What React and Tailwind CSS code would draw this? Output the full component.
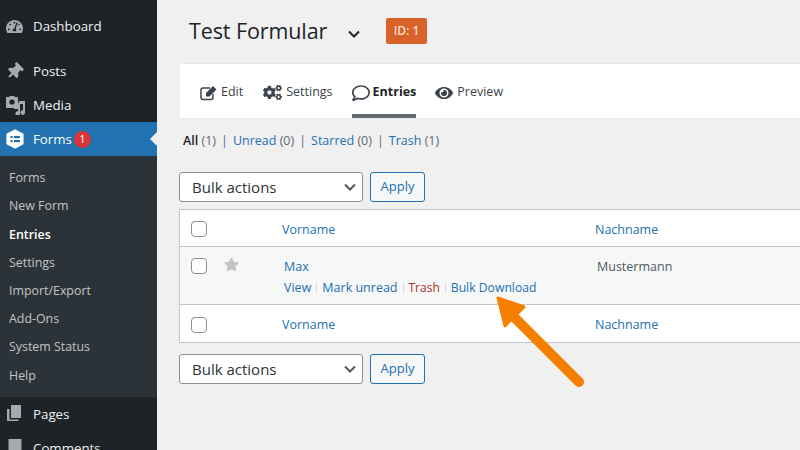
import React from "react";
import { FaCogs, FaRegComment, FaEye, FaTachometerAlt, FaThumbtack, FaStar } from "react-icons/fa";

const font = { fontFamily: '"Open Sans", "Noto Sans", sans-serif' };

function MediaIcon() {
  return (
    <svg width="20" height="20" viewBox="0 0 20 20" fill="currentColor">
      <path d="M1 1h3l1-1h4l1 1h3v12H9v-1H1z" transform="translate(0 1)" />
      <circle cx="7" cy="7" r="2.6" fill="#1d2327" />
      <path d="M14 6h6v11.5a2.3 2.3 0 1 1-2-2.2V9h-3v9.5a2.3 2.3 0 1 1-2-2.2V8h1z" />
    </svg>
  );
}
function FormsIcon() {
  return (
    <svg width="20" height="20" viewBox="0 0 20 20">
      <path d="M10 1.500l7.600 4v9L10 18.500l-7.600-4v-9z" fill="#fff" stroke="#fff" strokeWidth="2" strokeLinejoin="round" />
      <rect x="5.500" y="7" width="2.200" height="2.200" fill="#2271b1" />
      <rect x="9" y="7" width="6" height="2.200" fill="#2271b1" />
      <rect x="5.500" y="11" width="2.200" height="2.200" fill="#2271b1" />
      <rect x="9" y="11" width="6" height="2.200" fill="#2271b1" />
    </svg>
  );
}
function PagesIcon() {
  return (
    <svg width="16" height="17" viewBox="0 0 16 17" fill="currentColor">
      <rect x="4" y="0" width="10" height="13" />
      <path d="M0 4h2.500v10.500h9V16H0z" />
    </svg>
  );
}
function CommentsIcon() {
  return (
    <svg width="16" height="17" viewBox="0 0 16 17" fill="currentColor">
      <path d="M1.500 0h13v11H9l-4 4v-4H1.500z" />
    </svg>
  );
}
function EditIcon() {
  return (
    <svg width="18" height="16" viewBox="0 0 18 16" className="text-[#3c434a]">
      <path d="M13 9v3.500a2 2 0 0 1-2 2H3a2 2 0 0 1-2-2V5a2 2 0 0 1 2-2h7" fill="none" stroke="currentColor" strokeWidth="1.500" />
      <path d="M6 8l7-7 3.500 3.500-7 7H6z" fill="currentColor" />
    </svg>
  );
}
function Chevron({ className }) {
  return (
    <svg className={className} width="14" height="14" viewBox="0 0 14 14" fill="none" stroke="currentColor" strokeWidth="2">
      <path d="M2 4.500l5 5 5-5" />
    </svg>
  );
}

function MenuItem({ icon, label, className = "" }) {
  return (
    <div className={`flex items-center h-[34px] shrink-0 text-[13.300px] text-[#f0f0f1] ${className}`}>
      <span className="w-[33px] flex justify-center pr-[4px] text-[#a7aaad]">{icon}</span>
      <span className="pt-[2px]">{label}</span>
    </div>
  );
}

function Sidebar() {
  const subs = ["Forms", "New Form", "Entries", "Settings", "Import/Export", "Add-Ons", "System Status", "Help"];
  return (
    <aside className="w-[157px] shrink-0 bg-[#1d2327] flex flex-col pt-[9px] overflow-hidden">
      <MenuItem icon={<FaTachometerAlt size={17} />} label="Dashboard" className="mb-[11px]" />
      <MenuItem icon={<FaThumbtack size={17} className="rotate-45" />} label="Posts" />
      <MenuItem icon={<MediaIcon />} label="Media" />
      <div className="relative flex items-center h-[34px] bg-[#2271b1] text-[13.300px] text-[#fff] shrink-0">
        <span className="w-[33px] flex justify-center pr-[4px]"><FormsIcon /></span>
        <span className="pt-[2px]">Forms</span>
        <span className="ml-[2px] w-[17px] h-[17px] rounded-full bg-[#d63638] text-white text-[11px] flex items-center justify-center">1</span>
        <span className="absolute right-0 top-[10px] border-y-[7px] border-r-[7px] border-y-transparent border-r-[#f0f0f1]" />
      </div>
      <div className="bg-[#2c3338] pt-[8.500px] pb-[6.500px] flex flex-col shrink-0">
        {subs.map((s) => (
          <div key={s} className={`h-[28.200px] flex items-center pl-[9px] text-[12.400px] ${s === "Entries" ? "text-white font-semibold" : "text-[#c3c4c7]"}`}>{s}</div>
        ))}
      </div>
      <MenuItem icon={<PagesIcon />} label="Pages" />
      <MenuItem icon={<CommentsIcon />} label="Comments" />
    </aside>
  );
}

function Tab({ icon, label, active, className = "" }) {
  return (
    <div className={`relative h-full pt-[3px] flex items-center text-[12.500px] ${active ? "text-[#1d2327] font-bold" : "text-[#3c434a]"} ${className}`}>
      {icon}
      <span>{label}</span>
      {active && <span className="absolute left-0 right-0 bottom-0 h-[4px] bg-[#646970]" />}
    </div>
  );
}

function BulkBar() {
  return (
    <div className="flex gap-[7px] ml-[-1px]">
      <div className="w-[184px] h-[30px] rounded-[3px] border border-[#8c8f94] bg-white flex items-center justify-between pl-[12px] pr-[5px] text-[15px] text-[#2c3338]">
        <span>Bulk actions</span>
        <Chevron className="text-[#50575e]" />
      </div>
      <div className="w-[55px] h-[30px] rounded-[3px] border border-[#2271b1] bg-[#f6f7f7] flex items-center justify-center text-[13px] text-[#2271b1]">Apply</div>
    </div>
  );
}

function Check() {
  return <span className="block w-[16px] h-[16px] rounded-[4px] border border-[#8c8f94] bg-white" />;
}

function TableRow({ children, className = "" }) {
  return <div className={`flex ${className}`}>{children}</div>;
}

function Sep() {
  return <span className="mx-[5px] w-px h-[11px] bg-[#dcdcde]" />;
}

function Pipe() {
  return <span className="mx-[5px] text-[#646970]">|</span>;
}

function HeadCells() {
  const link = "text-[#2271b1]";
  return (
    <>
      <span className="w-[102px] pl-[11px] pt-[2px]"><Check /></span>
      <span className={`w-[313px] pt-[4px] ${link}`}>Vorname</span>
      <span className={`pt-[4px] ${link}`}>Nachname</span>
    </>
  );
}

function Main() {
  const link = "text-[#2271b1]";
  return (
    <main className="flex-1 min-w-0 pl-[23px] flex flex-col overflow-hidden">
      <div className="h-[63px] flex items-center pl-[9px] pb-[1px] shrink-0">
        <h1 className="text-[21.500px] leading-none text-[#1d2327] w-[158px] tracking-[-0.1px]">Test Formular</h1>
        <Chevron className="text-[#1d2327] mt-[6px]" />
        <span className="ml-[25px] w-[41px] h-[26px] rounded-[2px] bg-[#d9622b] text-[#f7dccb] text-[12px] font-semibold flex items-center justify-center">ID: 1</span>
      </div>
      <div className="h-[56px] shrink-0 bg-white border-y border-[#e6e6e6] flex items-center pl-[20px]">
        <Tab icon={<EditIcon />} label="Edit" className="gap-[3px]" />
        <Tab icon={<FaCogs size={19} className="text-[#3c434a]" />} label="Settings" className="ml-[20px] gap-[4px]" />
        <Tab icon={<FaRegComment size={18} className="text-[#3c434a]" />} label="Entries" active className="ml-[19px] gap-[3px]" />
        <Tab icon={<FaEye size={18} className="text-[#3c434a]" />} label="Preview" className="ml-[19px] gap-[4px]" />
      </div>
      <div className="mt-[13px] h-[19px] flex items-center text-[12.500px] text-[#646970] whitespace-pre pl-[3px] shrink-0">
        <span className="font-semibold text-[#1d2327]">All</span><span> (1)</span><Pipe />
        <span className={link}>Unread</span><span> (0)</span><Pipe />
        <span className={link}>Starred</span><span> (0)</span><Pipe />
        <span className={link}>Trash</span><span> (1)</span>
      </div>
      <div className="mt-[21px] shrink-0"><BulkBar /></div>
      <div className="mt-[7px] ml-[-1px] border-y border-l border-[#c3c4c7] bg-white text-[12.500px] shrink-0">
        <TableRow className="h-[37px] items-center border-b border-[#c3c4c7]">
          <HeadCells />
        </TableRow>
        <TableRow className="h-[58px] bg-[#f6f7f7] border-b border-[#c3c4c7]">
          <span className="w-[44px] pl-[11px] pt-[11px]"><Check /></span>
          <span className="w-[60px] pt-[10px] text-[#c3c4c7]"><FaStar size={15} /></span>
          <div className="w-[313px] pt-[10px]">
            <div className={`${link} leading-[19px]`}>Max</div>
            <div className="mt-[2px] flex items-center leading-[19px]">
              <span className={link}>View</span>
              <Sep />
              <span className={link}>Mark unread</span>
              <Sep />
              <span className="text-[#b32d2e] text-[12px]">Trash</span>
              <Sep />
              <span className={`${link} whitespace-nowrap text-[12.200px]`}>Bulk Download</span>
            </div>
          </div>
          <span className="pt-[10px] leading-[19px] text-[#50575e]">Mustermann</span>
        </TableRow>
        <TableRow className="h-[37px] items-center">
          <HeadCells />
        </TableRow>
      </div>
      <div className="mt-[11px] shrink-0"><BulkBar /></div>
    </main>
  );
}

export default function App() {
  return (
    <div className="relative w-[800px] h-[450px] overflow-hidden flex bg-[#f0f0f1]" style={font}>
      <Sidebar />
      <Main />
      <svg className="absolute left-0 top-0 pointer-events-none" width="800" height="450" viewBox="0 0 800 450">
        <path d="M498 298l26 9-19 19z" fill="#f77f00" stroke="#f77f00" strokeWidth="3" strokeLinejoin="round" />
        <path d="M513 316l66 66" stroke="#f77f00" strokeWidth="10" strokeLinecap="round" />
      </svg>
    </div>
  );
}
